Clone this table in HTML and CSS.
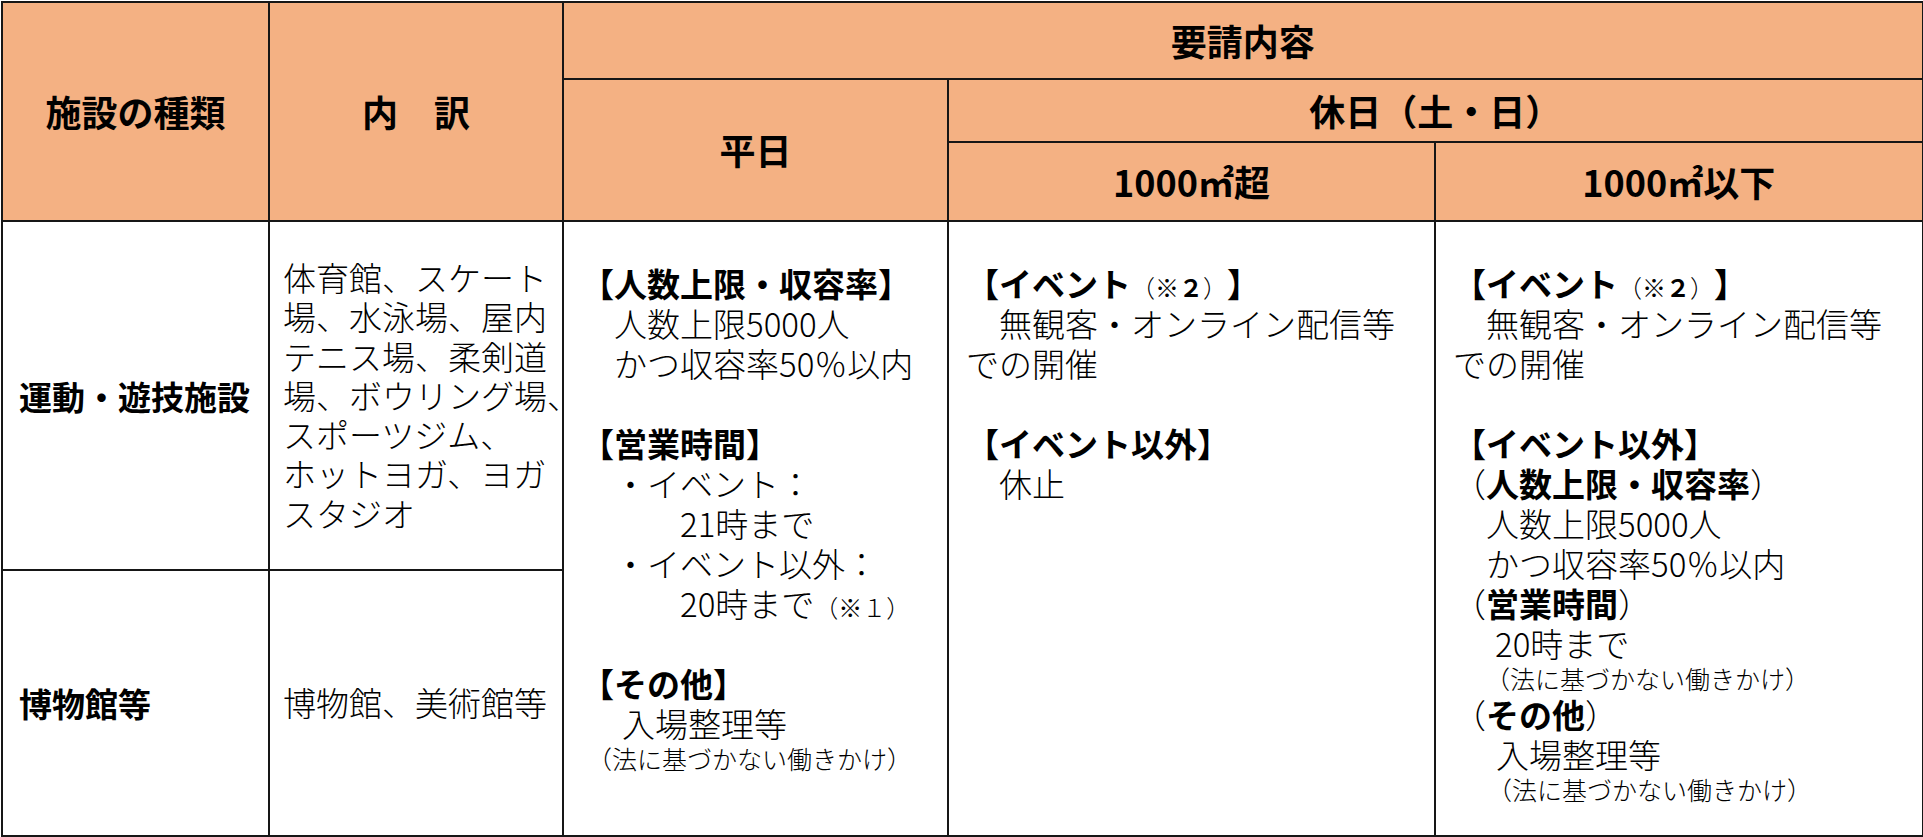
FILE: index.html
```html
<!DOCTYPE html>
<html lang="ja">
<head>
<meta charset="utf-8">
<title>要請内容</title>
<link rel="stylesheet" href="styles.css">
</head>
<body>
<table class="req">
  <colgroup>
    <col class="c-type">
    <col class="c-detail">
    <col class="c-weekday">
    <col class="c-large">
    <col class="c-small">
  </colgroup>
  <thead>
    <tr class="h1">
      <th rowspan="3">施設の種類</th>
      <th rowspan="3">内　訳</th>
      <th class="edge" colspan="3">要請内容</th>
    </tr>
    <tr class="h2">
      <th rowspan="2">平日</th>
      <th class="edge" colspan="2">休日（土・日）</th>
    </tr>
    <tr class="h3">
      <th>1000㎡超</th>
      <th class="edge">1000㎡以下</th>
    </tr>
  </thead>
  <tbody>
    <tr class="r1">
      <td class="type">運動・遊技施設</td>
      <td class="detail">
        <div>体育館、スケート</div>
        <div>場、水泳場、屋内</div>
        <div>テニス場、柔剣道</div>
        <div>場、ボウリング場、</div>
        <div>スポーツジム、</div>
        <div>ホットヨガ、ヨガ</div>
        <div>スタジオ</div>
      </td>
      <td class="plan" rowspan="2">
        <div class="hd">【人数上限・収容率】</div>
        <div>　人数上限5000人</div>
        <div>　かつ収容率50％以内</div>
        <div class="blank"></div>
        <div class="hd">【営業時間】</div>
        <div>　・イベント：</div>
        <div>　　　21時まで</div>
        <div>　・イベント以外：</div>
        <div>　　　20時まで<span class="note">（※１）</span></div>
        <div class="blank"></div>
        <div class="hd">【その他】</div>
        <div class="ind-41">入場整理等</div>
        <div class="sm ind-6">（法に基づかない働きかけ）</div>
      </td>
      <td class="plan" rowspan="2">
        <div class="hd">【イベント<span class="note">（※<b>２</b>）</span>】</div>
        <div>　無観客・オンライン配信等</div>
        <div>での開催</div>
        <div class="blank"></div>
        <div class="hd">【イベント以外】</div>
        <div>　休止</div>
      </td>
      <td class="plan edge" rowspan="2">
        <div class="hd">【イベント<span class="note">（※<b>２</b>）</span>】</div>
        <div>　無観客・オンライン配信等</div>
        <div>での開催</div>
        <div class="blank"></div>
        <div class="hd">【イベント以外】</div>
        <div class="hd"><span class="thin">（</span>人数上限・収容率<span class="thin">）</span></div>
        <div>　人数上限5000人</div>
        <div>　かつ収容率50％以内</div>
        <div class="hd"><span class="thin">（</span>営業時間<span class="thin">）</span></div>
        <div class="ind-42">20時まで</div>
        <div class="sm ind-32">（法に基づかない働きかけ）</div>
        <div class="hd"><span class="thin">（</span>その他<span class="thin">）</span></div>
        <div class="ind-43">入場整理等</div>
        <div class="sm ind-34">（法に基づかない働きかけ）</div>
      </td>
    </tr>
    <tr class="r2">
      <td class="type">博物館等</td>
      <td class="detail">
        <div>博物館、美術館等</div>
      </td>
    </tr>
  </tbody>
</table>
</body>
</html>
```

FILE: styles.css
```css
html, body {
  margin: 0;
  padding: 0;
  background: #ffffff;
}

body {
  font-family: "Noto Sans CJK JP", "Noto Sans", sans-serif;
  color: #000000;
  text-spacing-trim: space-all;
}

.req {
  border-collapse: collapse;
  table-layout: fixed;
  width: 1921px;
  margin: 1px 0 0 1px;
}

.c-type { width: 267px; }
.c-detail { width: 294px; }
.c-weekday { width: 385px; }
.c-large { width: 487px; }
.c-small { width: 488px; }

.req th,
.req td {
  border: 2px solid #161616;
}

.req .edge {
  border-right-width: 3px;
}

.req th {
  padding: 0;
  background: #f4b183;
  font-size: 36px;
  font-weight: 700;
  text-align: center;
  vertical-align: middle;
  line-height: 1.2;
}

.h1 { height: 77px; }
.h2 { height: 63px; }
.h3 { height: 79px; }
.r1 { height: 349px; }
.r2 { height: 266px; }

.req td.type {
  padding: 0 0 0 16px;
  font-size: 33px;
  font-weight: 700;
  vertical-align: middle;
  white-space: nowrap;
}

.req td.detail {
  padding: 0 0 0 13px;
  font-size: 33px;
  font-weight: 300;
  line-height: 39.3px;
  vertical-align: middle;
  white-space: nowrap;
}

.req td.plan {
  padding: 41px 0 0 17px;
  vertical-align: top;
  font-size: 33px;
  font-weight: 300;
  line-height: 40px;
  white-space: nowrap;
}

.plan .hd { font-weight: 700; }
.plan .thin { font-weight: 300; }
.blank { height: 40px; }

.plan .sm {
  font-size: 25px;
  line-height: 31px;
}

.note {
  font-size: 24px;
  line-height: 1;
  font-weight: 300;
}

.note b { font-weight: 700; }

.ind-6 { padding-left: 6px; }
.ind-32 { padding-left: 32px; }
.ind-34 { padding-left: 34px; }
.ind-41 { padding-left: 41px; }
.ind-42 { padding-left: 42px; }
.ind-43 { padding-left: 43px; }
```
